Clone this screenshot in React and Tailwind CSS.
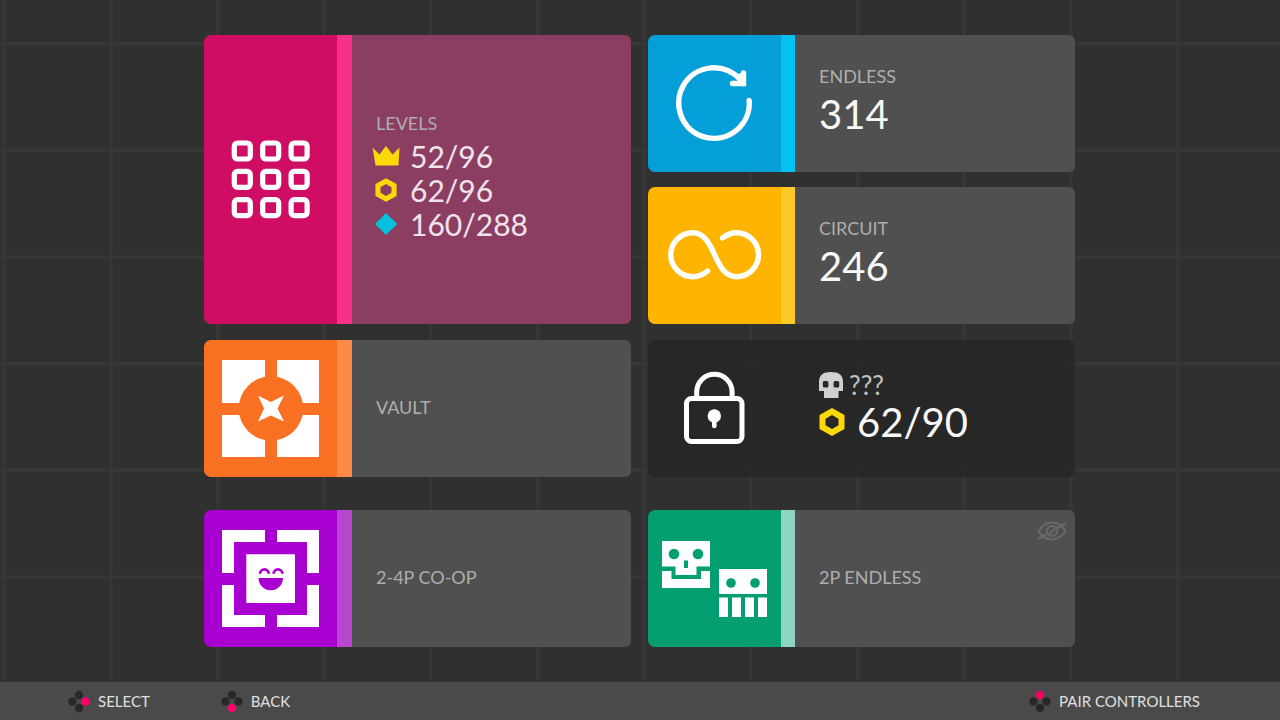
const FONT = "font-['Lato','Open_Sans',sans-serif]";

function GridIcon() {
  return (
    <svg viewBox="0 0 133 289" className="h-[289px] w-[133px]" fill="none" stroke="#fff" strokeWidth="5.2" aria-hidden="true">
      {[108, 136.3, 164.6].map((y) =>
        [30.3, 58.7, 87.1].map((x) => (
          <rect key={`${x}-${y}`} x={x} y={y} width="16" height="16" rx="3.2" />
        ))
      )}
    </svg>
  );
}

function TileSvg({ children, ...rest }) {
  return (
    <svg viewBox="0 0 133 137" className="h-[137px] w-[133px]" aria-hidden="true" {...rest}>
      {children}
    </svg>
  );
}

function LoopIcon() {
  return (
    <TileSvg fill="none" stroke="#fff" strokeWidth="5.4" strokeLinecap="round">
      <path d="M101.2 65.5a35.3 35.3 0 1 1-8.5-20.5" />
      <path d="M84.5 48.5H95.5V38" />
      <path d="M92 41 95.500 48.500" />
    </TileSvg>
  );
}

function InfinityIcon() {
  return (
    <TileSvg fill="none" stroke="#fff" strokeWidth="5.4" strokeLinecap="round">
      <path d="M59.5 84C55 87.8 50 89.7 44.8 89.7A22 22 0 0 1 44.8 45.7C68 45.7 65 89.7 88.5 89.7A22 22 0 0 0 88.5 45.7C83.5 45.7 78.500 47.700 74.500 51" />
    </TileSvg>
  );
}

function VaultIcon() {
  return (
    <TileSvg fill="#fff">
      <path d="M18 20H61V63H18ZM73 20H115V63H73ZM18 75H61V117H18ZM73 75H115V117H73Z" />
      <circle cx="67" cy="68.5" r="32.3" fill="#fa7124" />
      <path d="M54 55.5 66.800 62 80 55.5 73.500 68.5 80 81.5 66.800 75.500 54 81.5 60 68.5Z" />
    </TileSvg>
  );
}

function LockIcon() {
  return (
    <TileSvg fill="none" stroke="#fff" strokeWidth="5">
      <rect x="38.5" y="58.5" width="55.5" height="43" rx="5" />
      <path d="M48.7 58V52a17.7 17.7 0 0 1 35.4 0V58" />
      <circle cx="66.3" cy="76" r="6.7" fill="#fff" stroke="none" />
      <path d="M66.3 78V86" strokeWidth="4.6" strokeLinecap="round" />
    </TileSvg>
  );
}

function CoopIcon() {
  return (
    <TileSvg fill="#fff">
      <path d="M18 20H61V32H30V63H18ZM73 20H115V63H103V32H73ZM18 75H30V105H61V117H18ZM103 75H115V117H73V105H103Z" />
      <path d="M42.3 44.3H91V93H42.3Z" />
      <path d="M54.5 68H79A12.2 12.2 0 0 1 54.5 68Z" fill="#a900d2" />
      <path d="M56 63.800a4.400 4.400 0 0 1 8.800 0M69.600 63.800a4.400 4.400 0 0 1 8.800 0" fill="none" stroke="#a900d2" strokeWidth="2.8" />
    </TileSvg>
  );
}

function RobotsIcon() {
  return (
    <TileSvg fill="#fff">
      <path d="M14 31H62V56.5H48.5V65H27.5V56.5H14ZM14 61H23.5V69H53V61H62V78H14Z" />
      <path d="M71 59H119V84H71ZM71 87.5H80V107H71ZM84 87.5H93V107H84ZM97 87.5H106V107H97ZM110 87.5H119V107H110Z" />
      <g fill="#049e71">
        <circle cx="26" cy="44" r="5.3" />
        <circle cx="50" cy="44" r="5.3" />
        <path d="M36 50.5H40V58H36Z" />
        <circle cx="83" cy="73" r="4.8" />
        <circle cx="107" cy="73" r="4.8" />
      </g>
    </TileSvg>
  );
}

function Crown() {
  return (
    <svg viewBox="0 0 28 20" className="h-5 w-7" fill="#fbd909" aria-hidden="true">
      <path d="M.5 1.5 7.5 8.5 14 0 20.5 8.5 27.5 1.5 26.5 19.5H3.5Z" />
    </svg>
  );
}

function Hexagon({ className }) {
  return (
    <svg viewBox="0 0 26 28" className={className} fill="#fbd909" fillRule="evenodd" aria-hidden="true">
      <path d="M13 0 25.5 7V21L13 28 .5 21V7ZM13 7 6.5 10.7V17.3L13 21 19.5 17.3V10.7Z" />
    </svg>
  );
}

function Diamond() {
  return (
    <svg viewBox="0 0 22 22" className="size-[22px]" fill="#00c2de" aria-hidden="true">
      <path d="M11 0 22 11 11 22 0 11Z" />
    </svg>
  );
}

function Skull() {
  return (
    <svg viewBox="0 0 24 26" className="h-[26px] w-6" fill="#d0d0d0" aria-hidden="true">
      <path d="M0 10C0 3 4 0 12 0S24 3 24 10V19H19.5V26H5V19H0Z" />
      <rect x="3.8" y="9" width="5.6" height="6.5" rx="1.5" fill="#272727" />
      <rect x="14.6" y="9" width="5.6" height="6.5" rx="1.5" fill="#272727" />
    </svg>
  );
}

function HiddenEye() {
  return (
    <svg viewBox="0 0 30 20" className="h-5 w-[30px]" fill="none" stroke="#686868" strokeWidth="2.2" aria-hidden="true">
      <path d="M1.5 10.5C5 4.5 9.5 1.5 15 1.5S25 4.5 28.5 10C25 15.5 20.5 18.5 15 18.5S5 15.5 1.5 10.5Z" />
      <circle cx="15" cy="10" r="5" />
      <path d="M1 18 11 12.5M12.5 12.5 18 7.5M19 8 29 2" />
    </svg>
  );
}

function Card({ icon, tile, stripe, body, className = "", children }) {
  return (
    <button type="button" className={`relative flex min-h-[137px] w-full cursor-pointer text-left ${className}`}>
      <span className={`flex w-[133px] shrink-0 items-center justify-center rounded-l-[7px] ${tile}`}>{icon}</span>
      <span className={`shrink-0 ${stripe}`} />
      <span className={`flex min-w-0 flex-1 flex-col justify-center pl-6 ${body}`}>{children}</span>
    </button>
  );
}

const BODY = "bg-[#505050] rounded-r-[6px] pb-1";

function Label({ children }) {
  return <span className="text-[18px] leading-6 text-[#aeaeae]">{children}</span>;
}

function Score({ children }) {
  return <span className="text-[40px] leading-[52px] text-[#f8f8f8]">{children}</span>;
}

function Stat({ icon, children }) {
  return (
    <span className="flex h-[34px] items-center gap-2.5">
      <span className="-ml-1 flex w-7 justify-center">{icon}</span>
      <span className="text-[30px] leading-[34px] text-[#f0e4ea]">{children}</span>
    </span>
  );
}

const PAD = { top: [11, 5], left: [4.5, 11.5], right: [17.5, 11.5], bottom: [11, 18] };

function Hint({ active, children }) {
  return (
    <button type="button" className="flex cursor-pointer items-center gap-2 text-[15px] text-[#e0e0e0]">
      <svg viewBox="0 0 22 23" className="h-[23px] w-[22px]" aria-hidden="true">
        {Object.entries(PAD).map(([side, [cx, cy]]) => (
          <circle key={side} cx={cx} cy={cy} r="4.2" fill={side === active ? "#ff0069" : "#282828"} />
        ))}
      </svg>
      {children}
    </button>
  );
}

export default function App() {
  return (
    <div
      className={`flex min-h-screen flex-col bg-[#303030] bg-[linear-gradient(to_right,#373737_3px,transparent_3px),linear-gradient(to_bottom,#373737_3px,transparent_3px)] bg-[position:3px_42px] [background-size:calc(100vw/12)_calc(100vw/12)] ${FONT}`}
    >
      <main className="mx-auto w-full max-w-[872px] flex-1 pt-[35px] pr-px">
        <div className="grid grid-cols-2 gap-x-[17px] gap-y-[15px]">
          <Card className="row-span-2" icon={<GridIcon />} tile="bg-[#d00d65]" stripe="w-[15px] bg-[#f73189]" body="bg-[#8b3e61] rounded-r-[6px] pb-2">
            <Label>LEVELS</Label>
            <span className="mt-1 flex flex-col">
              <Stat icon={<Crown />}>52/96</Stat>
              <Stat icon={<Hexagon className="h-6 w-[22px]" />}>62/96</Stat>
              <Stat icon={<Diamond />}>160/288</Stat>
            </span>
          </Card>
          <Card icon={<LoopIcon />} tile="bg-[#049ed8]" stripe="w-[14px] bg-[#00c2f3]" body={BODY}>
            <Label>ENDLESS</Label>
            <Score>314</Score>
          </Card>
          <Card icon={<InfinityIcon />} tile="bg-[#ffb400]" stripe="w-[14px] bg-[#ffca28]" body={BODY}>
            <Label>CIRCUIT</Label>
            <Score>246</Score>
          </Card>
        </div>
        <div className="mt-4 grid grid-cols-2 gap-x-[17px]">
          <Card icon={<VaultIcon />} tile="bg-[#fa7124]" stripe="w-[15px] bg-[#ff8a48]" body={BODY}>
            <Label>VAULT</Label>
          </Card>
          <Card icon={<LockIcon />} className="rounded-[7px] bg-[#272727]/90" tile="" stripe="w-[14px]" body="pb-0.5">
            <span className="flex h-7 items-center gap-1.5">
              <Skull />
              <span className="text-[26px] leading-7 text-[#c0c0c0]">???</span>
            </span>
            <span className="flex h-[46px] items-center gap-3">
              <Hexagon className="h-7 w-[26px]" />
              <Score>62/90</Score>
            </span>
          </Card>
        </div>
        <div className="mt-[33px] grid grid-cols-2 gap-x-[17px]">
          <Card icon={<CoopIcon />} tile="bg-[#a900d2]" stripe="w-[15px] bg-[#b747d1]" body={BODY}>
            <Label>2-4P CO-OP</Label>
          </Card>
          <Card icon={<RobotsIcon />} tile="bg-[#049e71]" stripe="w-[14px] bg-[#8dd5c0]" body={BODY}>
            <Label>2P ENDLESS</Label>
            <span className="absolute top-[11px] right-2">
              <HiddenEye />
            </span>
          </Card>
        </div>
      </main>
      <footer className="flex h-[38px] items-center bg-[#4a4a4a] pr-20 pl-[68px]">
        <div className="flex gap-[71px]">
          <Hint active="right">SELECT</Hint>
          <Hint active="bottom">BACK</Hint>
        </div>
        <div className="ml-auto">
          <Hint active="top">PAIR CONTROLLERS</Hint>
        </div>
      </footer>
    </div>
  );
}
